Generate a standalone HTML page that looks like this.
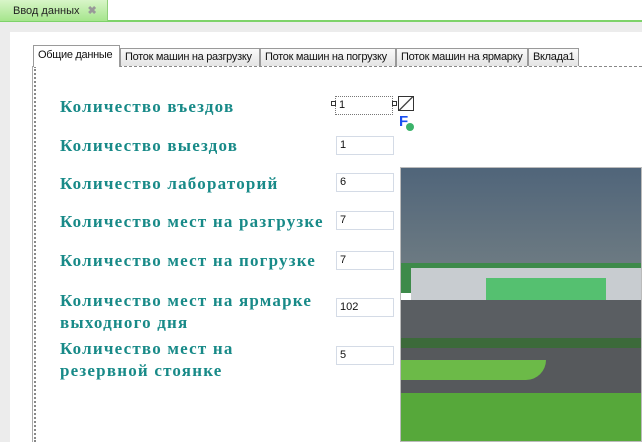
<!DOCTYPE html>
<html><head><meta charset="utf-8"><style>
*{margin:0;padding:0;box-sizing:border-box}
body{width:642px;height:442px;overflow:hidden;background:#fff;position:relative;font-family:"Liberation Sans",sans-serif}
.topbar{position:absolute;left:0;top:0;width:642px;height:22px;background:#fff;border-bottom:2px solid #7ed36a}
.gtab{position:absolute;left:0;top:0;width:108px;height:21px;background:linear-gradient(#d8f5c8,#a5e58c);border-right:1px solid #8fcf7a;font-size:11px;color:#222;padding:4px 0 0 13px}
.gtab span{color:#999;font-weight:bold;margin-left:8px}
.bg{position:absolute;left:0;top:22px;width:642px;height:420px;background:#ececec}
.panel{position:absolute;left:10px;top:32px;width:632px;height:410px;background:#fff}
.vline{position:absolute;left:32px;top:66px;width:1px;height:376px;background:#aaa}
.tab{position:absolute;top:48px;height:18px;background:linear-gradient(#fafafa,#e4e4e4);border:1px solid #9a9a9a;border-bottom:none;font-size:11px;letter-spacing:-0.3px;color:#111;padding:2px 3px 0 4px;white-space:nowrap;overflow:hidden}
.tab.act{top:45px;height:22px;background:#fff;padding-top:3px}
.dash{position:absolute;left:34px;top:66px;width:608px;height:376px;border-top:1px dashed #888;border-left:2px dotted #888}
.lbl{position:absolute;left:60px;font-family:"Liberation Serif",serif;font-weight:bold;font-size:17px;color:#188a88;line-height:22px;letter-spacing:1.2px}
.inp{position:absolute;left:336px;width:58px;height:19px;border:1px solid #d4dbe6;background:#fff;font-size:11px;color:#111;padding:2px 0 0 3px}
.img{position:absolute;left:400px;top:167px;width:242px;height:275px;border:1px solid #bbb;overflow:hidden}
</style></head><body>
<div class="topbar"><div class="gtab">Ввод данных<span>✖</span></div></div>
<div class="bg"></div>
<div class="panel"></div>
<div class="vline"></div>
<div class="dash"></div>
<div class="tab act" style="left:33px;width:87px">Общие данные</div>
<div class="tab" style="left:120px;width:140px">Поток машин на разгрузку</div>
<div class="tab" style="left:260px;width:136px">Поток машин на погрузку</div>
<div class="tab" style="left:396px;width:132px">Поток машин на ярмарку</div>
<div class="tab" style="left:528px;width:51px">Вклада1</div>

<div class="lbl" style="top:96px">Количество въездов</div>
<div class="lbl" style="top:135px">Количество выездов</div>
<div class="lbl" style="top:173px">Количество лабораторий</div>
<div class="lbl" style="top:211px">Количество мест на разгрузке</div>
<div class="lbl" style="top:250px">Количество мест на погрузке</div>
<div class="lbl" style="top:290px">Количество мест на ярмарке<br>выходного дня</div>
<div class="lbl" style="top:338px">Количество мест на<br>резервной стоянке</div>

<div class="inp" style="top:96px;left:335px;border:1px dotted #777;">1</div>
<div style="position:absolute;left:331px;top:101px;width:5px;height:5px;border:1px solid #333;background:#fff"></div>
<div style="position:absolute;left:392px;top:101px;width:5px;height:5px;border:1px solid #333;background:#fff"></div>
<div style="position:absolute;left:398px;top:96px;width:16px;height:15px;border:1px solid #333;background:linear-gradient(135deg,#fff 45%,#444 48%,#444 52%,#fff 55%)"></div>
<div style="position:absolute;left:399px;top:113px;font:bold 15px 'Liberation Sans',sans-serif;color:#1a4ff0">F</div>
<div style="position:absolute;left:406px;top:123px;width:8px;height:8px;border-radius:50%;background:#3bb36a"></div>
<div class="inp" style="top:136px">1</div>
<div class="inp" style="top:173px">6</div>
<div class="inp" style="top:211px">7</div>
<div class="inp" style="top:251px">7</div>
<div class="inp" style="top:298px">102</div>
<div class="inp" style="top:346px">5</div>

<div class="img">
<div style="position:absolute;left:0;top:0;width:242px;height:95px;background:linear-gradient(#50657a,#6c7a82)"></div>
<div style="position:absolute;left:0;top:95px;width:242px;height:30px;background:#3e8a4a"></div>
<div style="position:absolute;left:10px;top:100px;width:232px;height:32px;background:#c8ccd0"></div>
<div style="position:absolute;left:85px;top:110px;width:120px;height:22px;background:#55c070"></div>
<div style="position:absolute;left:0;top:132px;width:242px;height:45px;background:#5a5e62"></div>
<div style="position:absolute;left:0;top:170px;width:242px;height:20px;background:#3c6a3a"></div>
<div style="position:absolute;left:0;top:180px;width:242px;height:45px;background:#56595c"></div>
<div style="position:absolute;left:0;top:192px;width:145px;height:20px;background:#6cba48;border-radius:0 0 20px 0"></div>
<div style="position:absolute;left:0;top:225px;width:242px;height:50px;background:#56a83a"></div>
</div>
</body></html>
